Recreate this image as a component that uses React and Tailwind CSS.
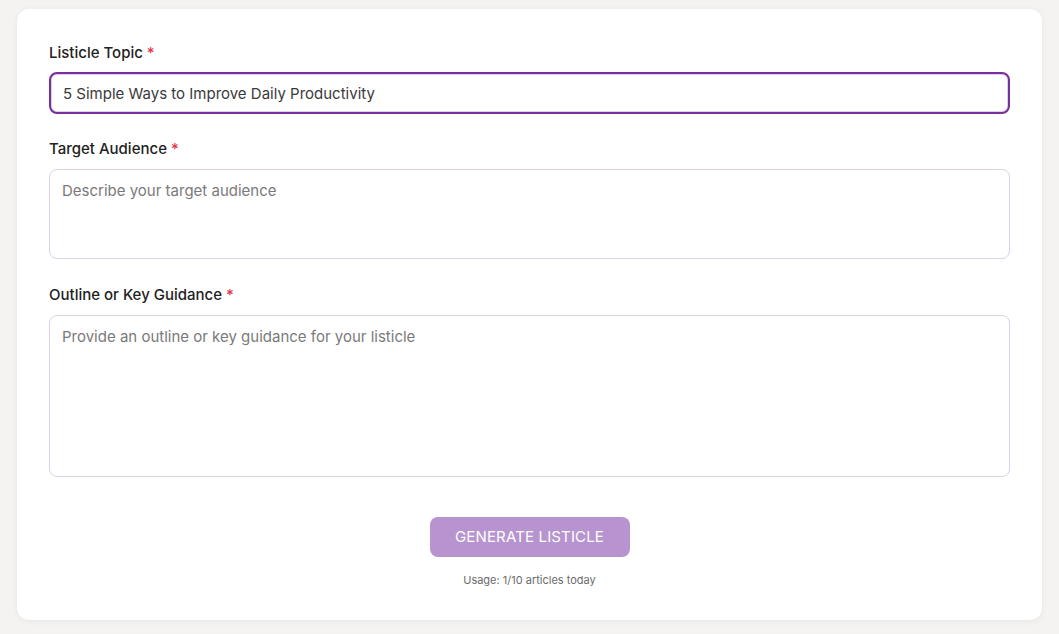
export default function App() {
  return (
    <div className="min-h-screen bg-[#f4f3f2] px-[17px] pt-[9px] pb-[14px] font-['Inter','Noto_Sans',sans-serif]">
      <div className="bg-white rounded-xl shadow-[0_1px_6px_rgba(0,0,0,0.06)] px-8 pt-[34px] pb-[31px]">
        <form className="flex flex-col" onSubmit={(e) => e.preventDefault()}>
          <label className="text-[15px] font-medium text-[#222] leading-5 mb-[9px]">
            Listicle Topic <span className="text-[#e5334a]">*</span>
          </label>
          <input
            type="text"
            defaultValue="5 Simple Ways to Improve Daily Productivity"
            className="h-[42px] rounded-lg border-2 border-[#7a2e9e] px-3 text-[15px] text-[#3a3a3a] outline-none shadow-[inset_0_0_0_1px_#ddd3e8]"
          />

          <label className="text-[15px] font-medium text-[#222] leading-5 mt-[25px] mb-[10px]">
            Target Audience <span className="text-[#e5334a]">*</span>
          </label>
          <textarea
            placeholder="Describe your target audience"
            className="h-[90px] resize-none rounded-lg border border-[#ddd0ea] px-3 py-[10px] text-[15px] text-[#3a3a3a] placeholder:text-[#7a7a7a] outline-none"
          />

          <label className="text-[15px] font-medium text-[#222] leading-5 mt-[26px] mb-[10px]">
            Outline or Key Guidance <span className="text-[#e5334a]">*</span>
          </label>
          <textarea
            placeholder="Provide an outline or key guidance for your listicle"
            className="h-[162px] resize-none rounded-lg border border-[#ddd0ea] px-3 py-[10px] text-[15px] text-[#3a3a3a] placeholder:text-[#7a7a7a] outline-none"
          />

          <div className="flex flex-col items-center mt-[40px]">
            <button
              type="submit"
              disabled
              className="w-[200px] h-10 rounded-lg bg-[#b794cf] text-white text-[15px] tracking-[0.01em]"
            >
              GENERATE LISTICLE
            </button>
            <p className="mt-[15px] text-[11px] text-[#6b6b6b]">Usage: 1/10 articles today</p>
          </div>
        </form>
      </div>
    </div>
  );
}
